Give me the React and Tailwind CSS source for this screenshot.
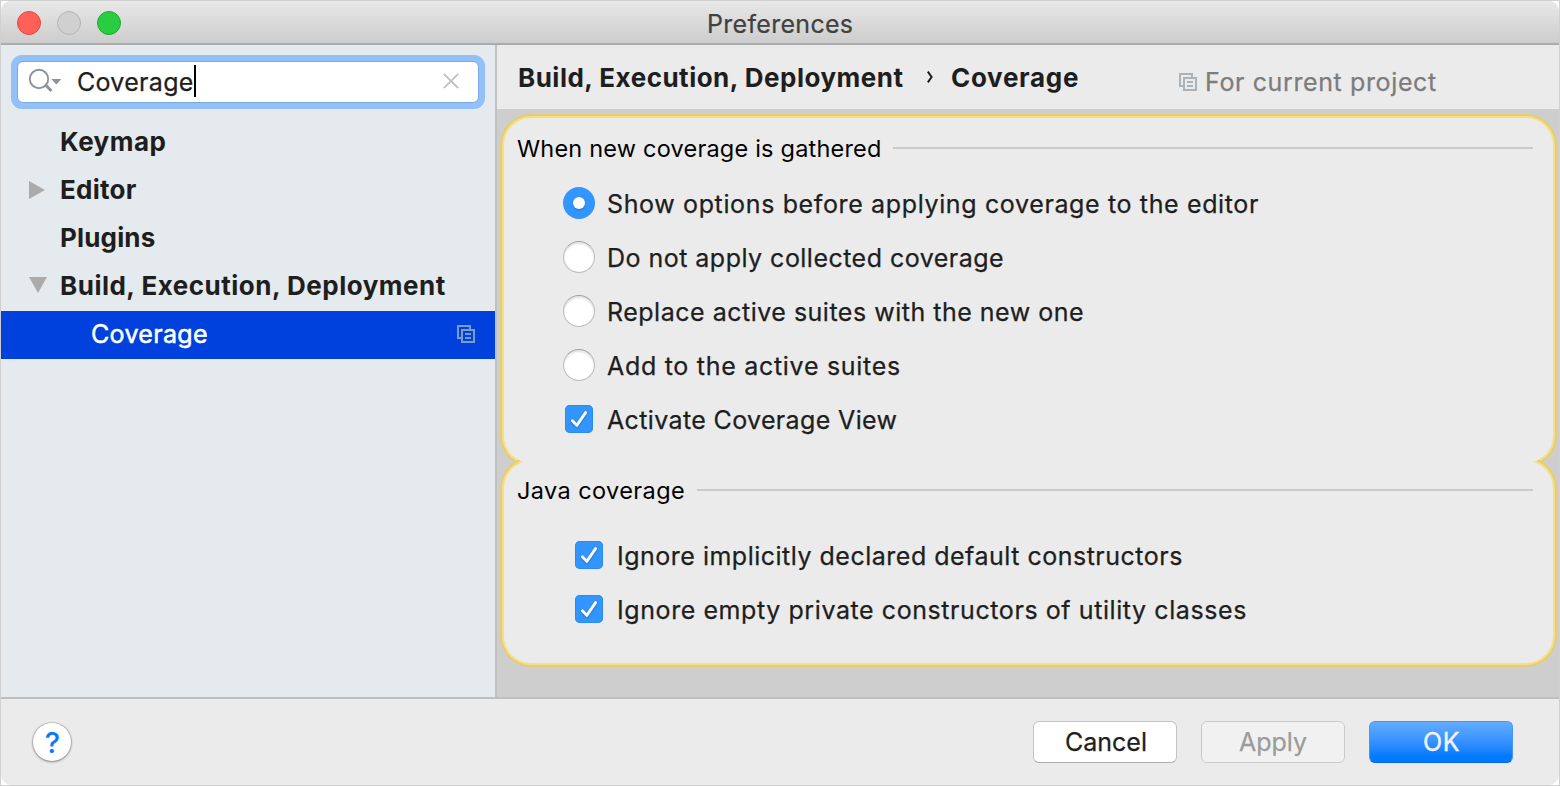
function CopyIcon({ className }) {
  return (
    <svg viewBox="0 0 18 18" className={className} fill="none" stroke="currentColor" strokeWidth="2">
      <path d="M4 13H1V1h12v3" />
      <path d="M5 5h12v12H5z" />
      <path d="M8 9h6M8 13h6" />
    </svg>
  );
}

function Radio({ checked }) {
  return checked ? (
    <span className="flex size-8 items-center justify-center rounded-full bg-[#3395ff]">
      <span className="size-3 rounded-full bg-white shadow-[0_1px_2px_rgba(0,40,120,0.35)]" />
    </span>
  ) : (
    <span className="size-8 rounded-full border border-[#bdbdbd] border-t-[#a0a0a0] bg-white shadow-[inset_0_2px_2px_rgba(0,0,0,0.12)]" />
  );
}

function Checkbox() {
  return (
    <span className="flex size-7 items-center justify-center rounded-[5px] bg-[#3395ff] shadow-[inset_0_0_0_1px_#2b8bf5]">
      <svg viewBox="0 0 28 28" className="size-7 drop-shadow-[0_1px_1px_rgba(0,50,140,0.4)]" fill="none" stroke="#fff" strokeWidth="2.8" strokeLinecap="round" strokeLinejoin="round">
        <path d="M7.4 15.8 11.8 20.4 20.6 7.6" />
      </svg>
    </span>
  );
}

function SectionTitle({ children, className }) {
  return (
    <div className="flex h-6 items-center text-[23.5px] leading-6 text-black">
      <span className={className}>{children}</span>
      <span className="mb-px h-0.5 flex-1 bg-[#cacaca]" />
    </div>
  );
}

function Option({ control, label, className }) {
  return (
    <label className="flex h-[54px] items-center">
      {control}
      <span className={`pt-0.5 leading-8 [-webkit-text-stroke:0.25px_currentColor] ${className}`}>{label}</span>
    </label>
  );
}

function Group({ children, className }) {
  return (
    <section className={`relative rounded-[31px] bg-[#e1cd7a] ${className}`}>
      <div className="absolute inset-0.5 z-0 rounded-[29px] bg-[#f6df83]" />
      <div className="absolute inset-1 z-10 rounded-[27px] bg-[#ebebeb]" />
      <div className="relative z-20">{children}</div>
    </section>
  );
}

const tree = [
  { label: "Keymap", className: "tracking-[0.46px]" },
  { label: "Editor", className: "tracking-[0.26px]", arrow: "right" },
  { label: "Plugins", className: "tracking-[0.16px]" },
  { label: "Build, Execution, Deployment", className: "tracking-[0.5px]", arrow: "down" },
];

export default function App() {
  return (
    <div className="h-[786px] w-[1560px] border border-[#d0d0d0] bg-white font-['Inter',sans-serif] text-[25px] text-[#1e1e1e]">
      <div className="flex h-full flex-col overflow-hidden rounded-[10px] bg-[#ebebeb]">
        <header className="flex h-11 shrink-0 items-center border-b-2 border-[#ababab] bg-linear-to-b from-[#e8e8e8] to-[#cdcdcd] pl-4">
          <div className="flex gap-4 pt-0.5">
            <span className="size-6 rounded-full border border-[#e2463f] bg-[#ff6058]" />
            <span className="size-6 rounded-full border border-[#b4b4b4] bg-[#d0d0d0]" />
            <span className="size-6 rounded-full border border-[#1aab29] bg-[#29cd42]" />
          </div>
          <h1 className="ml-[586px] pt-1 leading-8 tracking-[0.3px] text-[#404040] [-webkit-text-stroke:0.2px_currentColor]">Preferences</h1>
        </header>

        <main className="flex min-h-0 flex-1">
          <aside className="w-[496px] shrink-0 border-r-2 border-[#c0c0c0] bg-[#e5eaee] pt-2.5">
            <div className="ml-2.5 h-[54px] w-[474px] rounded-[11px] bg-[#94c0f8] p-1.5">
              <div className="flex h-full items-center rounded-[6px] border border-[#7ba7e4] bg-white pl-2.5">
                <svg viewBox="0 0 34 26" className="mb-0.5 h-[26px] w-[34px]" fill="none" stroke="#8a949c">
                  <circle cx="11" cy="11" r="9.2" strokeWidth="1.9" />
                  <path d="M17 16.5 23.5 23" strokeWidth="3" />
                  <path d="M23.3 11h10l-5 5.5z" fill="#8a949c" stroke="none" />
                </svg>
                <span className="ml-[15px] leading-8 tracking-[0.3px] [-webkit-text-stroke:0.25px_currentColor]">Coverage</span>
                <span className="mb-0.5 h-8 w-0.5 bg-black" />
                <svg viewBox="0 0 16 16" className="mr-[19px] mb-0.5 ml-auto size-4" fill="none" stroke="#bcc2c6" strokeWidth="1.9">
                  <path d="M.8.8l14.4 14.4M15.2.8.8 15.2" />
                </svg>
              </div>
            </div>
            <nav className="pt-[10px]">
              {tree.map((n) => (
                <div key={n.label} className="flex h-12 items-center pb-0.5 pl-[26px] font-bold">
                  <span className="flex w-[33px] items-center">
                    {n.arrow === "right" && (
                      <svg viewBox="0 0 16 18" className="ml-0.5 h-[18px] w-4" fill="#ababab"><path d="M0 0l16 9L0 18z" /></svg>
                    )}
                    {n.arrow === "down" && (
                      <svg viewBox="0 0 18 16" className="mb-[3px] ml-0.5 h-4 w-[18px]" fill="#ababab"><path d="M0 0h18L9 16z" /></svg>
                    )}
                  </span>
                  <span className={`text-[26px] leading-8 ${n.className}`}>{n.label}</span>
                </div>
              ))}
              <div className="flex h-12 items-center justify-between bg-[#0041dd] pr-5 pl-[90px] text-white">
                <span className="pb-0.5 leading-8 tracking-[0.331px] [-webkit-text-stroke:0.5px_white]">Coverage</span>
                <CopyIcon className="mb-0.5 size-[18px] text-[#7b9cc8]" />
              </div>
            </nav>
          </aside>

          <div className="flex min-w-0 flex-1 flex-col bg-[#cecece]">
            <div className="flex h-16 shrink-0 items-center bg-[#ebebeb] pl-[21px]">
              <span className="w-[410px] pt-0.5 text-[26px] leading-8 font-bold tracking-[0.49px]">
                Build, Execution, Deployment
              </span>
              <svg viewBox="0 0 6 12" className="-ml-px h-3 w-1.5" fill="none" stroke="#1e1e1e" strokeWidth="2">
                <path d="M.8.6 4.6 6 .8 11.4" />
              </svg>
              <span className="ml-[18px] w-[131px] pt-0.5 text-[26px] leading-8 font-bold tracking-[0.7px]">Coverage</span>
              <div className="ml-[97px] flex items-center pt-2.5 text-[#7c7c7c]">
                <CopyIcon className="size-[18px] text-[#a9b3b9]" />
                <span className="ml-2 leading-8 tracking-[0.62px] [-webkit-text-stroke:0.25px_currentColor]">For current project</span>
              </div>
            </div>

            <div className="pt-[4.5px] pr-0.5 pl-[3px]">
              <Group className="h-[353px] pt-[23px] pr-6 pl-[17px]">
                <SectionTitle className="mr-[11px] tracking-[0.205px]">When new coverage is gathered</SectionTitle>
                <div className="pt-[15.5px] pl-[46px]">
                  <Option control={<Radio checked />} label="Show options before applying coverage to the editor" className="ml-3 tracking-[0.637px]" />
                  <Option control={<Radio />} label="Do not apply collected coverage" className="ml-3 tracking-[0.475px]" />
                  <Option control={<Radio />} label="Replace active suites with the new one" className="ml-3 tracking-[0.505px]" />
                  <Option control={<Radio />} label="Add to the active suites" className="ml-3 tracking-[0.709px]" />
                  <div className="pl-0.5">
                    <Option control={<Checkbox />} label="Activate Coverage View" className="ml-3.5 tracking-[0.36px]" />
                  </div>
                </div>
              </Group>
              <Group className="-mt-2.5 h-[210px] pt-[21.5px] pr-6 pl-[17px]">
                <SectionTitle className="mr-[12px] pt-0.5 tracking-[0.406px]">Java coverage</SectionTitle>
                <div className="pt-[25.5px] pl-[58px]">
                  <Option control={<Checkbox />} label="Ignore implicitly declared default constructors" className="ml-3.5 tracking-[0.5px]" />
                  <Option control={<Checkbox />} label="Ignore empty private constructors of utility classes" className="ml-3.5 tracking-[0.58px]" />
                </div>
              </Group>
            </div>
          </div>
        </main>

        <footer className="flex h-[88px] shrink-0 items-center border-t-2 border-[#bfbfbf] pr-[46px] pl-8">
          <button className="flex size-[38px] items-center justify-center rounded-full bg-white pt-0.5 pl-px text-[29px] font-medium text-[#0a78ff] shadow-[0_0_0_1px_rgba(0,0,0,0.14),0_1px_3px_rgba(0,0,0,0.35)]">
            ?
          </button>
          <div className="ml-auto flex gap-6">
            <button className="h-[42px] w-36 rounded-[6px] border border-[#c4c4c4] border-b-[#acacac] bg-white pt-0.5 pl-0.5 [-webkit-text-stroke:0.25px_currentColor]">Cancel</button>
            <button className="h-[42px] w-36 rounded-[6px] border border-[#cacaca] bg-[#f1f1f1] pt-0.5 text-[#9b9b9b] [-webkit-text-stroke:0.25px_currentColor]">Apply</button>
            <button className="h-[42px] w-36 rounded-[6px] border border-[#3f98fb] border-b-[#0062f0] bg-linear-to-b from-[#62adff] to-[#007aff] to-85% pt-0.5 pl-px tracking-[0.5px] text-[#f3f3f3] [-webkit-text-stroke:0.4px_currentColor]">OK</button>
          </div>
        </footer>
      </div>
    </div>
  );
}
